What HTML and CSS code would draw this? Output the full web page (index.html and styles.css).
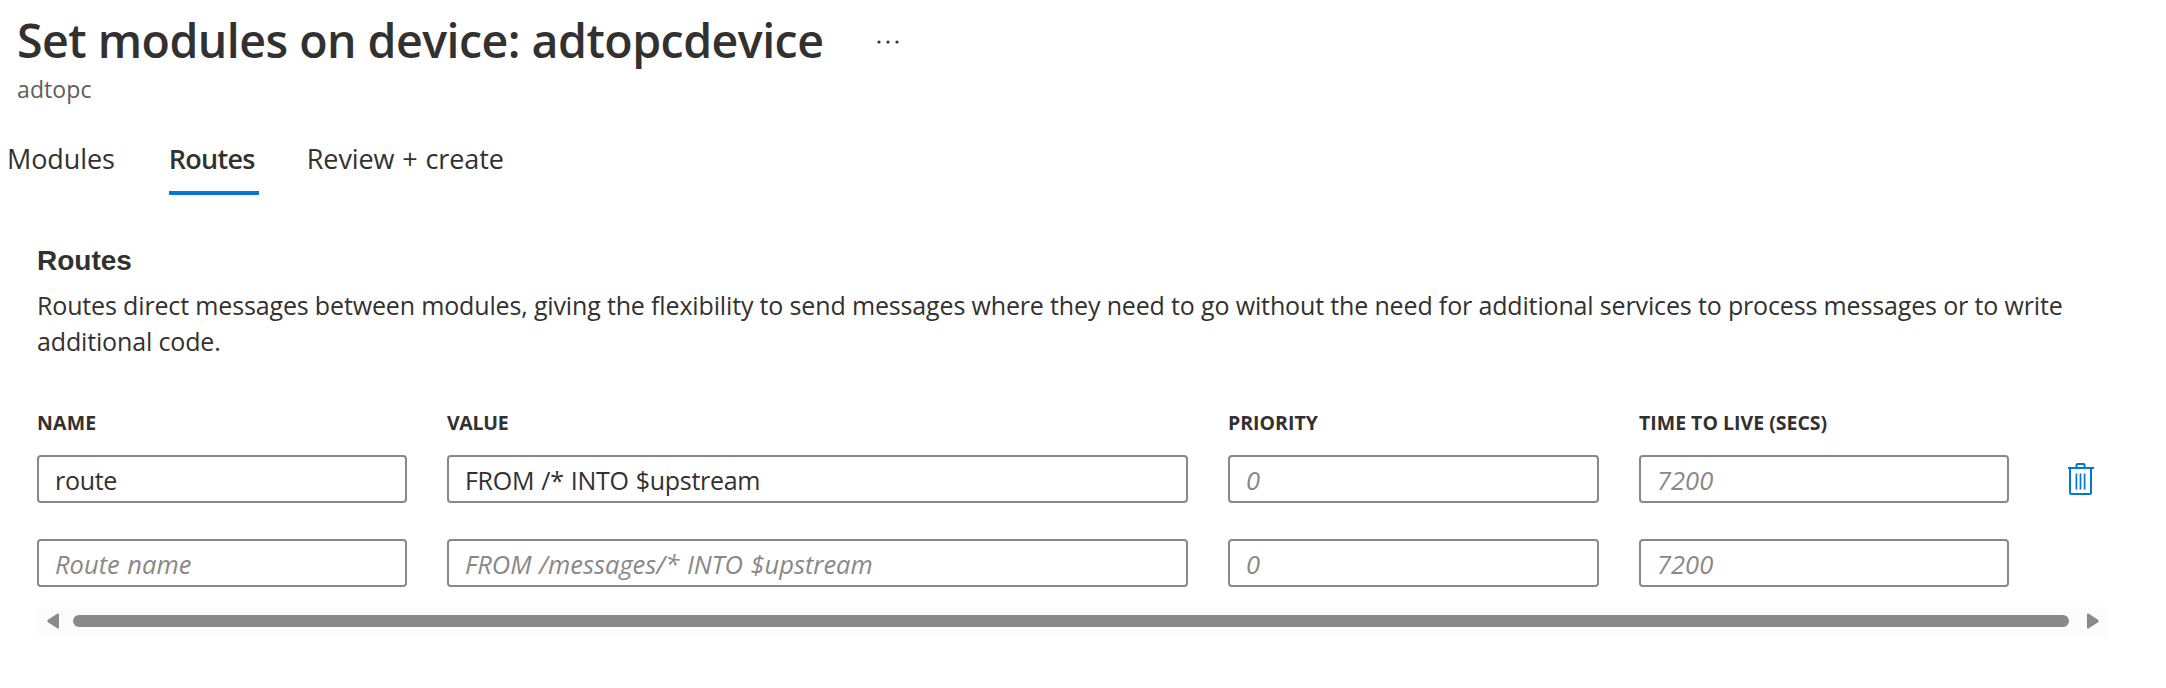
FILE: index.html
```html
<!DOCTYPE html>
<html lang="en">
<head>
<meta charset="utf-8">
<title>Set modules on device: adtopcdevice</title>
<link rel="stylesheet" href="styles.css">
</head>
<body>
<header class="header">
  <div class="title-row">
    <h1 class="title">Set modules on device: adtopcdevice</h1>
    <svg class="more" width="22" height="4" viewBox="0 0 22 4" role="img" aria-label="More"><circle cx="2" cy="2" r="1.6"/><circle cx="11" cy="2" r="1.6"/><circle cx="20" cy="2" r="1.6"/></svg>
  </div>
  <div class="subtitle">adtopc</div>
</header>
<nav class="tabs">
  <a class="tab">Modules</a>
  <a class="tab tab-active">Routes</a>
  <a class="tab">Review + create</a>
</nav>
<main class="content">
  <h2 class="section-title">Routes</h2>
  <p class="description">Routes direct messages between modules, giving the flexibility to send messages where they need to go without the need for additional services to process messages or to write additional code.</p>
  <div class="grid labels">
    <div class="label label-name">NAME</div>
    <div class="label label-value">VALUE</div>
    <div class="label">PRIORITY</div>
    <div class="label">TIME TO LIVE (SECS)</div>
  </div>
  <div class="grid row">
    <input class="field" type="text" value="route">
    <input class="field" type="text" value="FROM /* INTO $upstream">
    <input class="field" type="text" placeholder="0">
    <input class="field" type="text" placeholder="7200">
    <svg class="trash" width="28" height="34" viewBox="0 0 28 34" role="img" aria-label="Delete">
      <path d="M1 6H27M9.5 6V3Q9.5 2 10.5 2H16.5Q17.500 2 17.500 3V6M3 6V30.500Q3 32 4.500 32H22.500Q24 32 24 30.500V6" stroke-width="2"/>
      <path d="M9.400 11.500V27.500M13.500 11.500V27.500M17.600 11.500V27.500" stroke-width="1.700"/>
    </svg>
  </div>
  <div class="grid row">
    <input class="field" type="text" placeholder="Route name">
    <input class="field" type="text" placeholder="FROM /messages/* INTO $upstream">
    <input class="field" type="text" placeholder="0">
    <input class="field" type="text" placeholder="7200">
  </div>
  <div class="scrollbar">
    <svg class="arrow" width="12" height="16" viewBox="0 0 12 16"><path d="M12 1.500V14.500Q12 16 10.500 15.500L1 9.200Q-.5 8 1 6.800L10.500 .5Q12 0 12 1.500Z"/></svg>
    <div class="thumb"></div>
    <svg class="arrow" width="12" height="16" viewBox="0 0 12 16"><path d="M0 1.500V14.500Q0 16 1.500 15.500L11 9.200Q12.500 8 11 6.800L1.500 .5Q0 0 0 1.500Z"/></svg>
  </div>
</main>
</body>
</html>
```
FILE: styles.css
```css
* { box-sizing: border-box; }
body {
  margin: 0;
  background: #fff;
  color: #323130;
  font-family: "Open Sans", "Noto Sans", sans-serif;
}
.header { padding: 8px 0 0 17px; }
.title-row { display: flex; align-items: center; gap: 54px; }
.title {
  margin: 0;
  font-size: 46.5px;
  font-weight: 600;
  line-height: 64px;
  letter-spacing: -0.53px;
  white-space: nowrap;
}
.more { fill: #323130; margin-top: 4px; }
.subtitle {
  margin-top: 1px;
  font-size: 23px;
  line-height: 32px;
  letter-spacing: 0.1px;
  color: #605e5c;
}
.tabs {
  display: flex;
  gap: 54px;
  margin-top: 35px;
  padding-left: 7px;
}
.tab {
  height: 55px;
  font-size: 27px;
  line-height: 37px;
  letter-spacing: -0.1px;
  word-spacing: 1px;
  border-bottom: 4px solid transparent;
  white-space: nowrap;
}
.tab-active {
  width: 90px;
  font-weight: 600;
  letter-spacing: -0.7px;
  border-color: #0078d4;
  margin-right: -6px;
}
.content { padding: 50px 57px 0 37px; }
.section-title {
  margin: 0;
  font: bold 28px/32px "Liberation Sans", Arial, sans-serif;
}
.description {
  width: 2050px;
  margin: 10px 0 50px;
  font-size: 25px;
  line-height: 36px;
  letter-spacing: -0.15px;
}
.grid {
  display: grid;
  grid-template-columns: 370px 741px 371px 370px 28px;
  column-gap: 40px;
}
.label {
  font-size: 19.5px;
  font-weight: 700;
  line-height: 28px;
  letter-spacing: 0;
}
.label-name { letter-spacing: 0.2px; }
.label-value { letter-spacing: -0.3px; }
.row { height: 48px; margin-top: 18px; align-items: center; }
.row + .row { margin-top: 36px; }
.field {
  width: 100%;
  height: 48px;
  padding: 1px 16px 0;
  border: 2px solid #8a8886;
  border-radius: 4px;
  background: #fff;
  color: #323130;
  font: 25px "Open Sans", "Noto Sans", sans-serif;
  letter-spacing: -0.3px;
  word-spacing: 1px;
  outline: none;
}
.field:placeholder-shown { font-size: 25.5px; letter-spacing: 0; }
.field::placeholder { color: #8a8886; opacity: 1; font-style: italic; }
.trash { margin-left: 18px; fill: none; stroke: #0078d4; overflow: visible; }
.scrollbar {
  display: flex;
  align-items: center;
  width: 2072px;
  height: 28px;
  margin-top: 20px;
  padding: 0 10px;
  background: #fcfcfc;
}
.arrow { fill: #8a8a8a; flex: none; }
.thumb {
  flex: 1;
  height: 12px;
  margin: 0 18px 0 14px;
  border-radius: 6px;
  background: #8a8a8a;
}
```
